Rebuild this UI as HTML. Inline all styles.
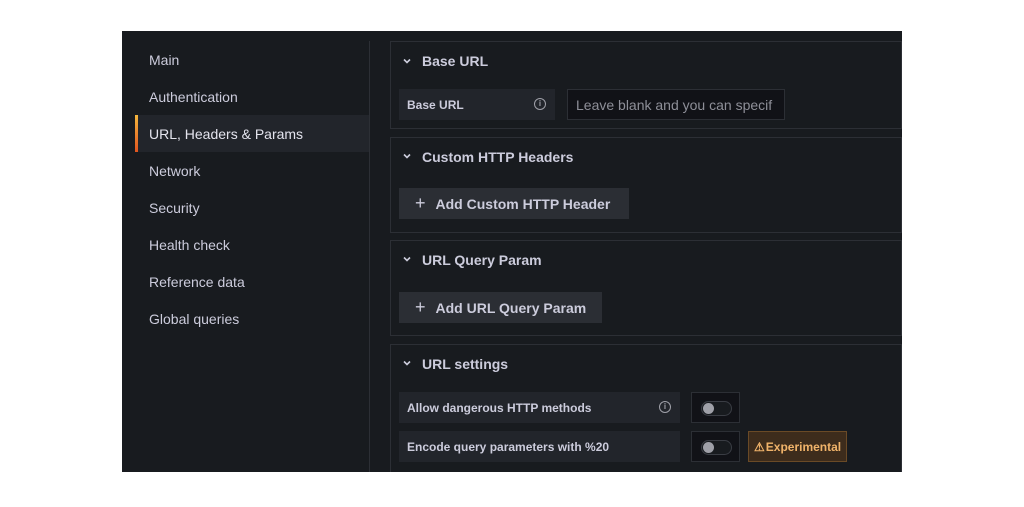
<!DOCTYPE html>
<html><head><style>
*{margin:0;padding:0;box-sizing:border-box}
body{width:1024px;height:507px;background:#fff;position:relative;font-family:"Liberation Sans",sans-serif;overflow:hidden}
.app{position:absolute;left:122px;top:31px;width:780px;height:441px;background:#181b1f;overflow:hidden}
.a{position:absolute}
.nav{left:27px;font-size:14px;color:#ccccdc}
.sel{left:13px;top:84px;width:234px;height:37px;background:#22252b}
.bar{left:13px;top:84px;width:3px;height:37px;background:linear-gradient(#f5b73d,#e0541f)}
.div{left:247px;top:10px;width:1px;height:440px;background:#2c2f35}
.box{left:268px;width:512px;border:1px solid #2c2f35;background:#181b1f}
.h{font-size:14px;color:#ccccdc;font-weight:bold}
.chev{width:10px;height:10px}
.lbl{background:#22252b;font-size:12px;font-weight:bold;color:#ccccdc;padding-left:8px;display:flex;align-items:center}
.btn{background:#2b2e34;font-size:14px;color:#ccccdc;font-weight:bold;display:flex;align-items:center}
.tog{border:1px solid #2c2f35;background:#111217;width:49px;height:31px}
.tog i{position:absolute;left:9px;top:8px;width:31px;height:15px;border:1px solid #3a3d44;border-radius:8px;background:#181b1f}
.tog b{position:absolute;left:11px;top:10px;width:11px;height:11px;border-radius:50%;background:#9fa0a8}
.info{width:12px;height:12px;border:1.2px solid #9fa0a8;border-radius:50%;font-size:8px;color:#9fa0a8;text-align:center;line-height:10px;font-weight:bold}
</style></head><body>
<div class="app">
<div class="a sel"></div><div class="a bar"></div>
<div class="a nav" style="top:21px">Main</div>
<div class="a nav" style="top:58px">Authentication</div>
<div class="a nav" style="top:95px;color:#e4e4ee">URL, Headers &amp; Params</div>
<div class="a nav" style="top:132px">Network</div>
<div class="a nav" style="top:169px">Security</div>
<div class="a nav" style="top:206px">Health check</div>
<div class="a nav" style="top:243px">Reference data</div>
<div class="a nav" style="top:280px">Global queries</div>
<div class="a div"></div>

<div class="a box" style="top:10px;height:88px"></div>
<svg class="a chev" style="left:280px;top:25px" viewBox="0 0 10 10"><path d="M2 3.5L5 6.5L8 3.5" fill="none" stroke="#ccccdc" stroke-width="1.6"/></svg>
<div class="a h" style="left:300px;top:22px">Base URL</div>
<div class="a lbl" style="left:277px;top:58px;width:156px;height:31px">Base URL</div>
<div class="a info" style="left:412px;top:67px">i</div>
<div class="a" style="left:445px;top:58px;width:218px;height:31px;border:1px solid #2c2f35;background:#111217;color:#8e8f98;font-size:14px;padding:7px 8px;white-space:nowrap;overflow:hidden">Leave blank and you can specif</div>

<div class="a box" style="top:106px;height:96px"></div>
<svg class="a chev" style="left:280px;top:120px" viewBox="0 0 10 10"><path d="M2 3.5L5 6.5L8 3.5" fill="none" stroke="#ccccdc" stroke-width="1.6"/></svg>
<div class="a h" style="left:300px;top:118px">Custom HTTP Headers</div>
<div class="a btn" style="left:277px;top:157px;width:230px;height:31px;padding-left:16px"><span style="font-size:18px;font-weight:normal;margin-right:10px">+</span>Add Custom HTTP Header</div>

<div class="a box" style="top:209px;height:96px"></div>
<svg class="a chev" style="left:280px;top:223px" viewBox="0 0 10 10"><path d="M2 3.5L5 6.5L8 3.5" fill="none" stroke="#ccccdc" stroke-width="1.6"/></svg>
<div class="a h" style="left:300px;top:221px">URL Query Param</div>
<div class="a btn" style="left:277px;top:261px;width:203px;height:31px;padding-left:16px"><span style="font-size:18px;font-weight:normal;margin-right:10px">+</span>Add URL Query Param</div>

<div class="a box" style="top:313px;height:140px"></div>
<svg class="a chev" style="left:280px;top:327px" viewBox="0 0 10 10"><path d="M2 3.5L5 6.5L8 3.5" fill="none" stroke="#ccccdc" stroke-width="1.6"/></svg>
<div class="a h" style="left:300px;top:325px">URL settings</div>
<div class="a lbl" style="left:277px;top:361px;width:281px;height:31px">Allow dangerous HTTP methods</div>
<div class="a info" style="left:537px;top:370px">i</div>
<div class="a tog" style="left:569px;top:361px"><i></i><b></b></div>
<div class="a lbl" style="left:277px;top:400px;width:281px;height:31px">Encode query parameters with %20</div>
<div class="a tog" style="left:569px;top:400px"><i></i><b></b></div>
<div class="a" style="left:626px;top:400px;width:99px;height:31px;background:#3d2c1c;border:1px solid #6a4a26;color:#f0b36a;font-size:12px;font-weight:bold;display:flex;align-items:center;padding-left:5px">&#9888;&#8202;Experimental</div>
</div>
</body></html>
